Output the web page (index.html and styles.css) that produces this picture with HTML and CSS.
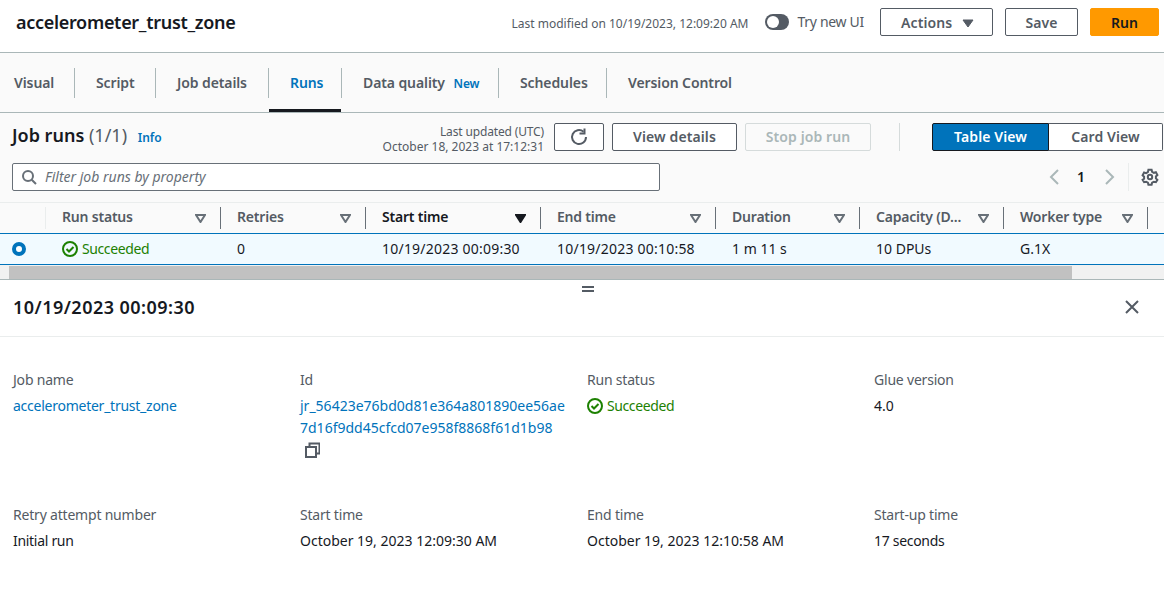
FILE: index.html
```html
<!DOCTYPE html>
<html lang="en">
<head>
<meta charset="utf-8">
<title>accelerometer_trust_zone</title>
<link rel="stylesheet" href="styles.css">
</head>
<body>
<header class="topbar">
  <h1 class="job-title">accelerometer_trust_zone</h1>
  <span class="modified">Last modified on 10/19/2023, 12:09:20 AM</span>
  <span class="toggle"><span class="knob"></span></span>
  <span class="try-ui">Try new UI</span>
  <button class="btn actions">Actions <svg class="caret" width="12" height="9" viewBox="0 0 12 9"><path d="M1 1h10L6 8z" fill="#545b64" stroke="#545b64"/></svg></button>
  <button class="btn save">Save</button>
  <button class="btn run">Run</button>
</header>
<nav class="tabs">
  <a class="tab t-visual">Visual</a>
  <a class="tab t-script">Script</a>
  <a class="tab t-details">Job details</a>
  <a class="tab t-runs active">Runs</a>
  <a class="tab t-quality">Data quality <span class="new">New</span></a>
  <a class="tab t-sched">Schedules</a>
  <a class="tab t-vc">Version Control</a>
</nav>
<section class="runs">
  <div class="toolbar">
    <h2 class="runs-title">Job runs <span class="count">(1/1)</span> <a class="info">Info</a></h2>
    <div class="updated"><span class="upd-top">Last updated (UTC)</span><br>October 18, 2023 at 17:12:31</div>
    <button class="btn refresh"><svg width="18" height="18" viewBox="0 0 18 18" fill="none" stroke="#545b64" stroke-width="2"><path d="M16 9A7 7 0 1 1 13.500 3.700"/><path d="M14.500 0.500V5.500H9.500"/></svg></button>
    <button class="btn details">View details</button>
    <button class="btn stop">Stop job run</button>
    <span class="tool-sep"></span>
    <div class="seg"><button class="seg-on">Table View</button><button class="seg-off">Card View</button></div>
  </div>
  <div class="filter-row">
    <div class="filter">
      <svg width="16" height="16" viewBox="0 0 16 16" fill="none" stroke="#687078" stroke-width="2"><circle cx="7" cy="7" r="5"/><path d="M10.700 10.700L15 15"/></svg>
      <span>Filter job runs by property</span>
    </div>
    <div class="pager">
      <svg width="12" height="16" viewBox="0 0 12 16" fill="none" stroke="#aab7b8" stroke-width="2"><path d="M10 1L3 8l7 7"/></svg>
      <span class="page">1</span>
      <svg width="12" height="16" viewBox="0 0 12 16" fill="none" stroke="#aab7b8" stroke-width="2"><path d="M2 1l7 7-7 7"/></svg>
      <span class="pager-sep"></span>
      <svg class="gear" width="18" height="18" viewBox="0 0 18 18" fill="none" stroke="#545b64" stroke-width="2"><circle cx="9" cy="9" r="2.200"/><path d="M7.400 1.800h3.200l.5 2 1.800 1 2-.6 1.500 2.800-1.500 1.400v2l1.500 1.400-1.500 2.400-2-.5-1.800 1-.5 2H7.400l-.5-2-1.800-1-2 .5-1.500-2.400L3.100 10.700v-2L1.600 7.300l1.500-2.800 2 .6 1.800-1z"/></svg>
    </div>
  </div>
  <div class="table">
    <div class="tr head">
      <div class="c c0"></div>
      <div class="c c1"><span class="hl">Run status</span><svg class="sort" width="11" height="9" viewBox="0 0 11 9"><path d="M1 1h9L5.500 8z" fill="none" stroke="#687078" stroke-width="2"/></svg></div>
      <div class="c c2 wide"><span class="hl">Retries</span><svg class="sort" width="11" height="9" viewBox="0 0 11 9"><path d="M1 1h9L5.500 8z" fill="none" stroke="#687078" stroke-width="2"/></svg></div>
      <div class="c c3 sorted"><span class="hl">Start time</span><svg class="sort" width="11" height="9" viewBox="0 0 11 9"><path d="M1 1h9L5.500 8z" fill="#16191f" stroke="#16191f" stroke-width="2"/></svg></div>
      <div class="c c3"><span class="hl">End time</span><svg class="sort" width="11" height="9" viewBox="0 0 11 9"><path d="M1 1h9L5.500 8z" fill="none" stroke="#687078" stroke-width="2"/></svg></div>
      <div class="c c2"><span class="hl">Duration</span><svg class="sort" width="11" height="9" viewBox="0 0 11 9"><path d="M1 1h9L5.500 8z" fill="none" stroke="#687078" stroke-width="2"/></svg></div>
      <div class="c c2"><span class="hl">Capacity (D...</span><svg class="sort" width="11" height="9" viewBox="0 0 11 9"><path d="M1 1h9L5.500 8z" fill="none" stroke="#687078" stroke-width="2"/></svg></div>
      <div class="c c2"><span class="hl">Worker type</span><svg class="sort" width="11" height="9" viewBox="0 0 11 9"><path d="M1 1h9L5.500 8z" fill="none" stroke="#687078" stroke-width="2"/></svg></div>
    </div>
    <div class="tr row">
      <div class="c c0"><span class="radio"></span></div>
      <div class="c c1 ok"><svg width="16" height="16" viewBox="0 0 16 16" fill="none" stroke="#1d8102" stroke-width="2"><circle cx="8" cy="8" r="7"/><path d="M4.500 8l2.500 2.500 4.500-4.500"/></svg>Succeeded</div>
      <div class="c c2 wide">0</div>
      <div class="c c3 date">10/19/2023 00:09:30</div>
      <div class="c c3 date">10/19/2023 00:10:58</div>
      <div class="c c2">1 m 11 s</div>
      <div class="c c2">10 DPUs</div>
      <div class="c c2">G.1X</div>
    </div>
  </div>
  <div class="scrollbar"><div class="thumb"></div></div>
</section>
<section class="panel">
  <div class="handle"></div>
  <div class="panel-head">
    <h2 class="panel-title">10/19/2023 00:09:30</h2>
    <svg class="close" width="16" height="16" viewBox="0 0 16 16" fill="none" stroke="#545b64" stroke-width="2"><path d="M2 2l12 12M14 2L2 14"/></svg>
  </div>
  <div class="grid">
    <div class="kv"><div class="k">Job name</div><div class="v"><a class="link name">accelerometer_trust_zone</a></div></div>
    <div class="kv"><div class="k">Id</div><div class="v id"><a class="link">jr_56423e76bd0d81e364a801890ee56ae7d16f9dd45cfcd07e958f8868f61d1b98</a>
      <svg class="copy" width="16" height="16" viewBox="0 0 16 16" fill="none" stroke="#545b64" stroke-width="2"><rect x="2" y="5" width="10" height="10"/><path d="M5.500 5V1.500h10v10H12"/></svg></div></div>
    <div class="kv"><div class="k">Run status</div><div class="v ok status"><svg width="16" height="16" viewBox="0 0 16 16" fill="none" stroke="#1d8102" stroke-width="2"><circle cx="8" cy="8" r="7"/><path d="M4.500 8l2.500 2.500 4.500-4.500"/></svg>Succeeded</div></div>
    <div class="kv"><div class="k">Glue version</div><div class="v">4.0</div></div>
    <div class="kv"><div class="k">Retry attempt number</div><div class="v txt">Initial run</div></div>
    <div class="kv"><div class="k">Start time</div><div class="v">October 19, 2023 12:09:30 AM</div></div>
    <div class="kv"><div class="k">End time</div><div class="v">October 19, 2023 12:10:58 AM</div></div>
    <div class="kv"><div class="k">Start-up time</div><div class="v txt">17 seconds</div></div>
  </div>
</section>
</body>
</html>
```
FILE: styles.css
```css
* { box-sizing: border-box; }
html, body { margin: 0; height: 100%; overflow: hidden; }
body { background: #fff; color: #16191f; font: 14px/22px "Noto Sans", sans-serif; width: 1164px; }
h1, h2 { margin: 0; }
button { font-family: inherit; cursor: pointer; }

.topbar { height: 53px; display: flex; align-items: center; border-bottom: 1px solid #aab7b8; padding: 0 5px 8px 16px; }
.job-title { font-size: 18px; font-weight: 600; line-height: 28px; letter-spacing: -.3px; }
.modified { margin-left: auto; font-size: 12px; color: #545b64; position: relative; top: 2px; }
.toggle { width: 24px; height: 16px; margin-left: 17px; border-radius: 8px; background: #545b64; display: flex; align-items: center; padding-left: 2px; }
.knob { width: 12px; height: 12px; border-radius: 50%; background: #fff; }
.try-ui { margin-left: 8px; margin-right: 16px; font-size: 14px; color: #545b64; letter-spacing: -.3px; }
.btn { height: 28px; border: 1px solid #545b64; border-radius: 2px; background: #fff; color: #545b64; font-size: 14px; font-weight: 600; padding: 0; letter-spacing: .1px; }
.actions { width: 113px; padding-left: 2px; }
.caret { margin-left: 6px; }
.save { width: 73px; margin-left: 12px; }
.run { width: 69px; margin-left: 12px; background: #ff9900; border-color: #ff9900; color: #16191f; }

.tabs { height: 60px; display: flex; background: #fafafa; border-bottom: 1px solid #aab7b8; padding-top: 15px; }
.tab { height: 30px; line-height: 30px; font-weight: 600; font-size: 14px; color: #545b64; border-right: 1px solid #aab7b8; position: relative; padding-left: 21px; letter-spacing: -.1px; }
.tab:first-child { padding-left: 14px; }
.t-visual { width: 75px; }
.t-script { width: 81px; }
.t-details { width: 113px; }
.t-runs { width: 73px; color: #0073bb; }
.t-quality { width: 157px; }
.t-sched { width: 108px; }
.t-vc { border-right: 0; }
.active::after { content: ""; position: absolute; left: 0; right: 0; top: 41px; height: 3px; background: #16191f; }
.new { margin-left: 5px; font-size: 12px; color: #0073bb; }

.runs { background: #fafafa; }
.toolbar { height: 50px; display: flex; align-items: flex-start; padding: 10px 0 0 12px; }
.toolbar .btn, .seg button { padding-bottom: 2px; }
.runs-title { font-size: 18px; font-weight: 600; line-height: 24px; width: 361px; }
.count { font-weight: 400; color: #545b64; }
.info { margin-left: 6px; font-size: 12px; font-weight: 600; color: #0073bb; }
.updated { width: 171px; font-size: 12px; line-height: 15px; padding-top: 1px; text-align: right; color: #545b64; margin-left: 0; }
.upd-top { letter-spacing: -.15px; }
.refresh { width: 50px; margin-left: 10px; display: flex; align-items: center; justify-content: center; padding-bottom: 0 !important; }
.details { width: 125px; margin-left: 8px; }
.stop { width: 126px; margin-left: 8px; border-color: #d5dbdb; color: #aab7b8; background: #fafafa; }
.tool-sep { width: 1px; height: 28px; background: #d5dbdb; margin-left: 28px; }
.seg { display: flex; margin-left: 32px; }
.seg button { height: 28px; font-size: 14px; font-weight: 600; border: 1px solid #16191f; letter-spacing: .1px; }
.seg-on { width: 117px; background: #0073bb; color: #fff; border-radius: 2px 0 0 2px; }
.seg-off { width: 114px; background: #fff; color: #545b64; border-left: 0 !important; border-color: #545b64 !important; border-radius: 0 2px 2px 0; }

.filter-row { height: 39px; display: flex; padding: 0 0 0 12px; }
.filter { width: 648px; height: 28px; border: 1px solid #687078; border-radius: 2px; background: #fff; display: flex; align-items: center; gap: 8px; padding-left: 8px; font-style: italic; color: #687078; font-size: 14px; }
.pager { margin-left: auto; display: flex; align-items: center; height: 28px; }
.page { width: 44px; text-align: center; font-weight: 600; font-size: 14px; position: relative; left: -1px; }
.pager-sep { width: 1px; height: 28px; background: #eaeded; margin: 0 12px 0 12px; }
.gear { margin-right: 5px; }

.table { font-size: 14px; }
.tr { display: flex; align-items: center; }
.head { height: 32px; border-top: 1px solid #eaeded; border-bottom: 1px solid #0073bb; background: #fafafa; font-weight: 600; color: #545b64; }
.hl { letter-spacing: -.2px; position: relative; top: -1px; }
.row { height: 31px; background: #f1faff; border-bottom: 1px solid #0073bb; color: #16191f; }
.c { height: 22px; display: flex; align-items: center; padding-left: 16px; padding-right: 14px; flex: none; }
.head .c { border-right: 1px solid #687078; justify-content: space-between; }
.head .c0 { border-right-color: #eaeded; }
.c0 { width: 46px; padding-left: 12px; }
.c1 { width: 175px; }
.c2 { width: 144px; }
.c3 { width: 175px; }
.wide { width: 145px; }
.sorted { color: #16191f; }
.date { letter-spacing: .22px; }
.radio { width: 14px; height: 14px; border-radius: 50%; border: 4px solid #0073bb; background: #fff; }
.ok { color: #1d8102; letter-spacing: -.4px; }
.row .ok { gap: 4px; }

.scrollbar { height: 15px; background: #f1f1f1; border-bottom: 1px solid #aab7b8; padding: 1px 0 0 9px; }
.thumb { width: 1063px; height: 13px; background: #c1c1c1; }

.panel { position: relative; background: #fff; }
.handle { position: absolute; left: 582px; top: 6px; width: 12px; height: 6px; border-top: 2px solid #545b64; border-bottom: 2px solid #545b64; }
.panel-head { height: 57px; display: flex; align-items: center; justify-content: space-between; padding: 0 24px 2px 13px; border-bottom: 1px solid #eaeded; }
.panel-title { font-size: 18px; font-weight: 600; line-height: 26px; letter-spacing: .47px; }
.close { display: block; }
.grid { display: grid; grid-template-columns: repeat(4, 287px); padding: 32px 0 0 13px; row-gap: 32px; }
.kv { min-height: 103px; }
.kv:nth-child(n+5) { min-height: 0; }
.k { color: #545b64; margin-bottom: 4px; letter-spacing: -.2px; }
.link { color: #0073bb; }
.name { letter-spacing: -.25px; }
.txt { letter-spacing: -.3px; }
.id { width: 267px; word-break: break-all; }
.copy { display: block; margin: 3px 0 0 4px; }
.status { display: flex; align-items: center; gap: 4px; }
```
